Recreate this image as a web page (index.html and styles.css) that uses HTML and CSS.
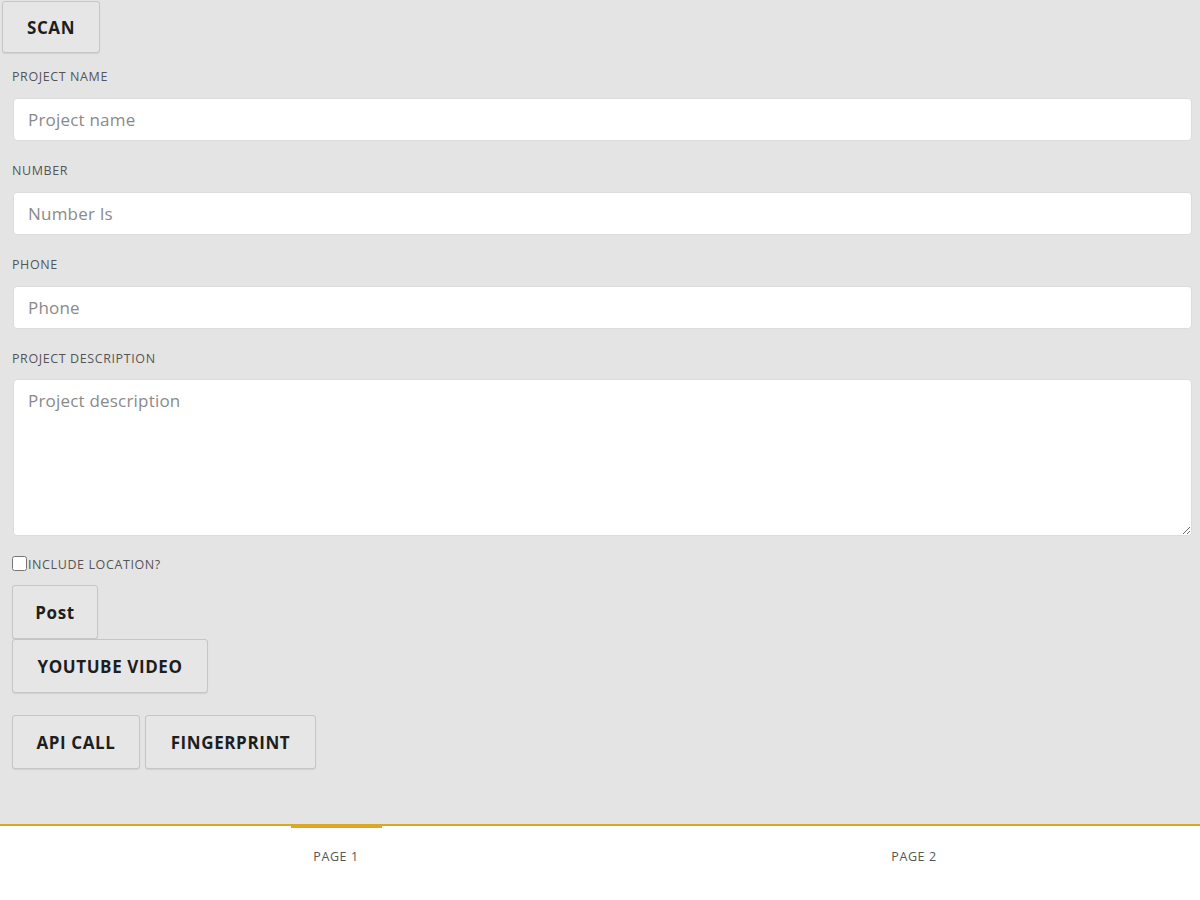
FILE: index.html
```html
<!DOCTYPE html>
<html lang="en">
<head>
  <meta charset="UTF-8">
  <title>Project</title>
  <link rel="stylesheet" href="styles.css">
</head>
<body>
  <div class="content">
    <button class="btn scan">SCAN</button>
    <div class="form">
      <label class="field-label">PROJECT NAME</label>
      <input type="text" class="field" placeholder="Project name" />

      <label class="field-label">NUMBER</label>
      <input type="text" class="field" placeholder="Number Is" />

      <label class="field-label">PHONE</label>
      <input type="text" class="field" placeholder="Phone" />

      <label class="field-label">PROJECT DESCRIPTION</label>
      <textarea class="field area" placeholder="Project description"></textarea>

      <div class="check-row">
        <input type="checkbox" class="check" />
        <span>INCLUDE LOCATION?</span>
      </div>

      <div class="btn-col">
        <button class="btn post">Post</button>
        <button class="btn youtube">YOUTUBE VIDEO</button>
      </div>
      <div class="btn-row">
        <button class="btn api">API CALL</button>
        <button class="btn finger">FINGERPRINT</button>
      </div>
    </div>
  </div>
  <div class="tabs">
    <div class="tab tab1 active"><span>PAGE 1</span></div>
    <div class="tab tab2"><span>PAGE 2</span></div>
  </div>
</body>
</html>
```

FILE: styles.css
```css
* {
  padding: 0;
  margin: 0;
  box-sizing: border-box;
}
body {
  width: 1200px;
  height: 900px;
  background-color: #fff;
  font-family: "Open Sans", "Noto Sans", "Liberation Sans", sans-serif;
  color: #222;
  overflow: hidden;
}
.content {
  height: 824px;
  background-color: #e4e4e4;
  padding-top: 1px;
}
.btn {
  display: flex;
  align-items: center;
  justify-content: center;
  height: 54px;
  background-color: #e6e6e6;
  border: 1px solid #c6c6c6;
  border-radius: 3px;
  box-shadow: 0 1px 1px rgba(0, 0, 0, .08);
  font-family: inherit;
  font-size: 17px;
  font-weight: 700;
  color: #1e1e1e;
  letter-spacing: .6px;
}
.scan {
  margin-left: 2px;
  width: 98px;
  height: 52px;
}
.form {
  padding: 0 9px 0 12px;
}
.field-label {
  display: block;
  margin-top: 22px;
  margin-bottom: 13px;
  height: 16px;
  line-height: 16px;
  font-size: 12.5px;
  color: #555;
  letter-spacing: .6px;
}
.scan + .form .field-label:first-child {
  margin-top: 16px;
}
.field {
  display: block;
  width: 1179px;
  margin-left: 1px;
  height: 43px;
  padding: 0 14px;
  border: 1px solid #dcdcdc;
  border-radius: 4px;
  background-color: #fff;
  outline: none;
  font-family: inherit;
  font-size: 17px;
  letter-spacing: .2px;
  color: #333;
}
.field::placeholder {
  color: #8a8a8a;
}
.area {
  height: 157px;
  padding-top: 9px;
  resize: vertical;
}
.field-label + .area {
  margin-top: -1px;
}
.check-row {
  display: flex;
  align-items: center;
  margin-top: 20px;
  height: 17px;
  font-size: 12.5px;
  color: #555;
  letter-spacing: .6px;
}
.check {
  width: 15px;
  height: 15px;
  margin: 0 1px 0 0;
  margin-top: -3px;
}
.btn-col {
  display: flex;
  flex-direction: column;
  align-items: flex-start;
  margin-top: 12px;
}
.post {
  width: 86px;
}
.youtube {
  width: 196px;
}
.btn-row {
  display: flex;
  gap: 5px;
  margin-top: 22px;
}
.api {
  width: 128px;
}
.finger {
  width: 171px;
}
.tabs {
  display: flex;
  height: 76px;
  border-top: 2px solid #dca823;
  background-color: #fff;
}
.tab {
  display: flex;
  justify-content: center;
  padding-top: 22px;
  font-size: 12.5px;
  color: #555;
  letter-spacing: .6px;
}
.tab span {
  position: relative;
}
.tab1 {
  width: 672px;
}
.tab2 {
  width: 484px;
}
.active span::before {
  content: '';
  position: absolute;
  left: 50%;
  top: -24px;
  width: 91px;
  margin-left: -45px;
  height: 4px;
  background-color: #dca823;
}
```
